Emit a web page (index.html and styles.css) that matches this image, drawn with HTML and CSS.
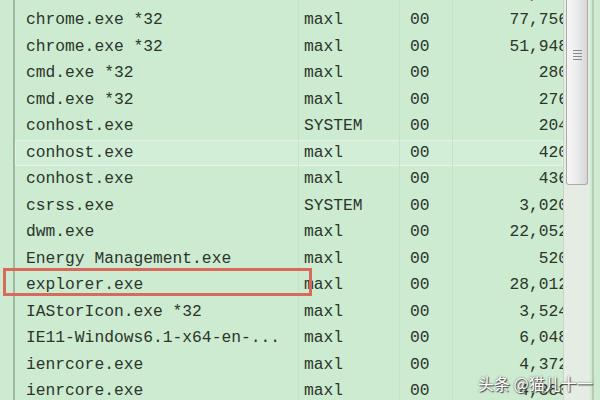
FILE: index.html
```html
<!DOCTYPE html>
<html lang="zh">
<head>
  <meta charset="UTF-8" />
  <title>进程列表</title>
  <link rel="stylesheet" href="styles.css">
</head>
<body>
  <div class="window">
    <div class="gutter"></div>

    <div class="list">
      <div class="row first"><span class="name">chrome.exe *32</span><span class="user">maxl</span><span class="sess">00</span><span class="mem">104,216</span></div>
      <div class="row"><span class="name">chrome.exe *32</span><span class="user">maxl</span><span class="sess">00</span><span class="mem">77,756</span></div>
      <div class="row"><span class="name">chrome.exe *32</span><span class="user">maxl</span><span class="sess">00</span><span class="mem">51,948</span></div>
      <div class="row"><span class="name">cmd.exe *32</span><span class="user">maxl</span><span class="sess">00</span><span class="mem">280</span></div>
      <div class="row"><span class="name">cmd.exe *32</span><span class="user">maxl</span><span class="sess">00</span><span class="mem">276</span></div>
      <div class="row"><span class="name">conhost.exe</span><span class="user">SYSTEM</span><span class="sess">00</span><span class="mem">204</span></div>
      <div class="row hover"><span class="name">conhost.exe</span><span class="user">maxl</span><span class="sess">00</span><span class="mem">420</span></div>
      <div class="row"><span class="name">conhost.exe</span><span class="user">maxl</span><span class="sess">00</span><span class="mem">436</span></div>
      <div class="row"><span class="name">csrss.exe</span><span class="user">SYSTEM</span><span class="sess">00</span><span class="mem">3,020</span></div>
      <div class="row"><span class="name">dwm.exe</span><span class="user">maxl</span><span class="sess">00</span><span class="mem">22,052</span></div>
      <div class="row"><span class="name">Energy Management.exe</span><span class="user">maxl</span><span class="sess">00</span><span class="mem">520</span></div>
      <div class="row"><span class="name">explorer.exe</span><span class="user">maxl</span><span class="sess">00</span><span class="mem">28,012</span></div>
      <div class="row"><span class="name">IAStorIcon.exe *32</span><span class="user">maxl</span><span class="sess">00</span><span class="mem">3,524</span></div>
      <div class="row"><span class="name">IE11-Windows6.1-x64-en-...</span><span class="user">maxl</span><span class="sess">00</span><span class="mem">6,048</span></div>
      <div class="row"><span class="name">ienrcore.exe</span><span class="user">maxl</span><span class="sess">00</span><span class="mem">4,372</span></div>
      <div class="row"><span class="name">ienrcore.exe</span><span class="user">maxl</span><span class="sess">00</span><span class="mem">4,380</span></div>
    </div>

    <div class="scrollbar">
      <div class="thumb">
        <div class="grip"></div>
      </div>
    </div>

    <div class="edge"></div>
  </div>

  <!-- 标注框 -->
  <div class="mark"></div>
  <div class="watermark">头条 @猫儿十一</div>
</body>
</html>
```

FILE: styles.css
```css
html, body {
  margin: 0;
  padding: 0;
}
body {
  background-color: #cdebd0;
  width: 600px;
  height: 400px;
  overflow: hidden;
  position: relative;
  font-family: "Liberation Mono", "DejaVu Sans Mono", monospace;
}
.window {
  display: flex;
  height: 400px;
}
.gutter {
  width: 13px;
  flex: none;
}
.list {
  width: 548px;
  flex: none;
  border-left: 2px solid #9db89f;
  overflow: hidden;
}
.row {
  display: grid;
  grid-template-columns: 284px 101px 53px 115px;
  height: 26.5px;
  line-height: 26.5px;
  font-size: 16.3px;
  color: #2b352c;
  white-space: nowrap;
}
.row.first {
  margin-top: -19.5px;
}
.row.hover {
  box-shadow: inset 0 0 0 1px #e4f2ea;
  border-radius: 2px;
  background: #d3eed7;
}
.name {
  padding-left: 11px;
  border-right: 1px solid #c3e2c6;
}
.user {
  padding-left: 5px;
  border-right: 1px solid #c3e2c6;
}
.sess {
  padding-left: 10px;
  border-right: 1px solid #c3e2c6;
}
.mem {
  text-align: right;
}
.scrollbar {
  width: 26px;
  flex: none;
  background: #e4ece4;
  border-left: 1px solid #c8d4c8;
  display: flex;
  flex-direction: column;
}
.thumb {
  height: 185px;
  margin: 0 2px;
  box-sizing: border-box;
  border: 1px solid #a9aca9;
  border-top: none;
  border-radius: 0 0 3px 3px;
  background: linear-gradient(to right, #f6f6f6, #ececec 50%, #d6d6d6);
  display: flex;
  justify-content: center;
  padding-top: 50px;
}
.grip {
  width: 9px;
  height: 12px;
  background: repeating-linear-gradient(to bottom, #8a8a8a 0, #8a8a8a 1px, transparent 1px, transparent 3px);
}
.edge {
  flex: 1;
  border-left: 2px solid #b5cbb6;
  margin-left: 2px;
}
.mark {
  position: absolute;
  left: 3px;
  top: 268px;
  width: 309px;
  height: 28px;
  box-sizing: border-box;
  border: 3px solid #d9695b;
}
.watermark {
  position: absolute;
  left: 478px;
  top: 371px;
  font-family: "Noto Sans CJK SC", sans-serif;
  font-size: 16px;
  color: #ffffff;
  text-shadow: 0 0 2px #555, 1px 1px 1px #444;
}
```
